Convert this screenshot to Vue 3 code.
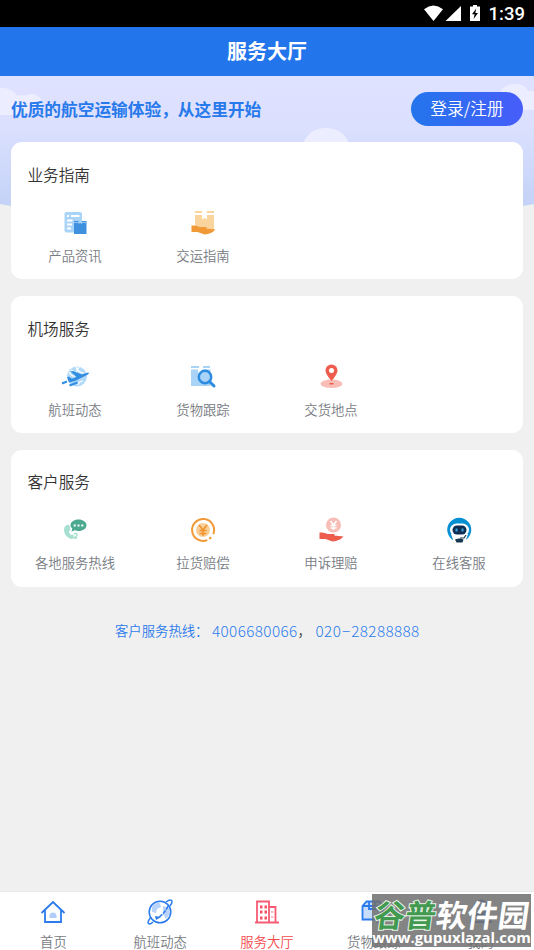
<script setup>
const sections = [
  { title: '业务指南', items: [{ icon: 'news', label: '产品资讯' }, { icon: 'ship', label: '交运指南' }] },
  { title: '机场服务', items: [{ icon: 'flight', label: '航班动态' }, { icon: 'track', label: '货物跟踪' }, { icon: 'place', label: '交货地点' }] },
  { title: '客户服务', items: [{ icon: 'phone', label: '各地服务热线' }, { icon: 'refund', label: '拉货赔偿' }, { icon: 'claim', label: '申诉理赔' }, { icon: 'robot', label: '在线客服' }] }
]
const tabs = [
  { icon: 'home', label: '首页' },
  { icon: 'globe', label: '航班动态' },
  { icon: 'hall', label: '服务大厅', active: true },
  { icon: 'box', label: '货物跟踪' },
  { icon: 'me', label: '我的' }
]
</script>

<template>
  <div class="screen">
    <div class="status">
      <svg class="status-icons" viewBox="0 0 60 20">
        <path d="M0 4.2Q9.5-3 19 4.2L9.5 16Z" fill="#fff" />
        <path d="M37 1V16H21.5Z" fill="#fff" />
        <path d="M46 1.5h3V0h4v1.500h3V16H46Z" fill="#fff" />
        <path d="M52.300 3.500 48 9.300h2.600L49.600 14l4.400-6h-2.700Z" fill="#000" />
      </svg>
      <span class="time">1:39</span>
    </div>
    <header class="header">服务大厅</header>

    <main class="body">
      <svg class="sky" viewBox="0 0 534 130" preserveAspectRatio="none">
        <defs>
          <linearGradient id="sky" x1="0" y1="0" x2="0" y2="1">
            <stop offset="0" stop-color="#dfe2ff" />
            <stop offset=".4" stop-color="#dbe0fe" />
            <stop offset="1" stop-color="#c3d2f7" />
          </linearGradient>
        </defs>
        <path d="M0 0H534V128L523 130H11L0 128Z" fill="url(#sky)" />
        <g fill="#eceeff">
          <path d="M0 12Q12 11 17 20Q22 18 24 20Q34 15 41 23Q43 28 41 34Q30 39 0 39Z" />
          <path d="M498 22Q501 8 515 8Q525 8 528 15L534 15V34H498Z" />
          <path d="M302 70Q308 52 326 52Q344 52 350 70Z" />
        </g>
      </svg>

      <div class="welcome">
        <h1>优质的航空运输体验，从这里开始</h1>
        <button class="login">登录/注册</button>
      </div>

      <section v-for="s in sections" :key="s.title" class="card">
        <h2>{{ s.title }}</h2>
        <div class="grid">
          <div v-for="i in s.items" :key="i.label" class="entry">
            <svg class="icon" viewBox="0 0 28 28">
              <g v-if="i.icon === 'news'">
                <rect x="3.500" y="3" width="17.500" height="20.500" rx="2" fill="#a9d3f7" />
                <path d="M6 7h2M10 7H18.500M6 11.500h5.500M6 15.500h5M6 19.500h4" stroke="#fff" stroke-width="2.200" />
                <path d="M13 12h4.500v3l1.700-1 1.700 1v-3H25.500v13H13Z" fill="#3f91e0" />
                <path d="M12.500 13.500h5M21 13.500h4.500" stroke="#8ec3f3" />
              </g>
              <g v-else-if="i.icon === 'ship'">
                <path d="M6 3h7M18 3h7" stroke="#f9d49d" stroke-width="2" />
                <path d="M6 6h7v4.500l2.500-1.500 2.500 1.500V6h7v15H6Z" fill="#f9d49d" />
                <path d="M2.500 16.500q5-.5 8 1.500h6q2 0 1 1.700h2L26.500 20.500Q22.500 25 15.500 25.500L8.500 23h-6Z" fill="#f19937" />
              </g>
              <g v-else-if="i.icon === 'flight'">
                <circle cx="16" cy="13.500" r="10" fill="#b2d9f8" />
                <path d="M8 9q3 5 6 4m1-9q2 6 8 6m-6 12q1-4 5-4M10 7l5 3 3-6" fill="none" stroke="#fff" stroke-width="1.200" />
                <path d="M6 14l2-.3 3 2 4.500-1.700-6-5.500 2.500-.5 9 3.500 6-2q2 .2 0 2L14 18l-6 1.500Z" fill="#318ee1" />
                <path d="M1 20.500l5-2M8.500 22.500l8-3" stroke="#318ee1" stroke-width="2" />
              </g>
              <g v-else-if="i.icon === 'track'">
                <path d="M2 4h8M14 4h7" stroke="#a9d3f7" stroke-width="2" />
                <path d="M2 6.500h7v4l2-1 2 1v-4h8.500V23H2Z" fill="#a9d3f7" />
                <circle cx="16" cy="14" r="6.200" fill="#a9d3f7" stroke="#2d8ce0" stroke-width="2.500" />
                <path d="M20.500 18.500 25 23" stroke="#2d8ce0" stroke-width="3" stroke-linecap="round" />
              </g>
              <g v-else-if="i.icon === 'place'">
                <ellipse cx="14.500" cy="20.700" rx="11" ry="4.300" fill="#f8bdb6" />
                <path d="M14.500 18Q8.500 11 8.500 7.500a6 6 0 0 1 12 0Q20.500 11 14.500 18Z" fill="#ed5c4d" />
                <circle cx="14.500" cy="7.500" r="2.500" fill="#fff" />
                <path d="M12.500 20.700h4" stroke="#ed5c4d" stroke-width="1.500" />
              </g>
              <g v-else-if="i.icon === 'phone'">
                <path d="M6 9q2.500-1 3 2l.3 3q-.3 1-1.500 1 0 2.500 2.200 4 1.500-1 2.500 0l.5 3q-2 2-5 0-5-3-5-8 0-4 3-5Z" fill="#a7e0d0" />
                <path d="M13 18q3-1.500 3 .5t-3 3.500h3" fill="none" stroke="#a7e0d0" stroke-width="1.500" />
                <path d="M17.500 3.500c4.500 0 8 2.500 8 5.700s-3.500 5.800-8 5.800q-2 0-3.500-.7l-3.500 1.200.8-3q-1.800-1.500-1.800-3.300c0-3.200 3.500-5.700 8-5.700Z" fill="#4ba98f" />
                <path d="M12.700 9.500h2M16.500 9.500h2M20.300 9.500h2" stroke="#fff" stroke-width="2" />
              </g>
              <g v-else-if="i.icon === 'refund'">
                <path d="M24.900 15.900a11 11 0 1 0-4.600 7.100M23.500 19.500l-1.500 2" transform="rotate(12 14 14)" fill="none" stroke="#f19937" stroke-width="2" />
                <circle cx="14" cy="14" r="7" fill="#f9cf97" />
                <path d="M10 9l4 5 4-5M14 14v6M10.500 14.500h7M10.500 17.500h7" fill="none" stroke="#ef942f" stroke-width="1.600" />
              </g>
              <g v-else-if="i.icon === 'claim'">
                <circle cx="16.500" cy="9" r="7.500" fill="#f8bdb6" />
                <path d="M13.500 5l3 4 3-4M16.500 9v5M13.500 9.500h6M13.500 12h6" fill="none" stroke="#fff" stroke-width="1.500" />
                <path d="M2.500 16.500q5-.5 8 1.500h6q2 0 1 1.700h2L26.500 20.500Q22.500 25 15.500 25.500L8.500 23h-6Z" fill="#ed5c4d" />
              </g>
              <g v-else>
                <path d="M9 24.500A12 12 0 1 1 19.500 24.500Z" fill="#078fd3" />
                <rect x="5" y="7.500" width="19" height="13" rx="6.500" fill="#fff" />
                <path d="M6 18h17l-3 8.500H9Z" fill="#fff" />
                <rect x="7.500" y="9.500" width="14" height="9" rx="4.500" fill="#102d52" />
                <path d="M11.500 12.500v3M17.500 12.500v3" stroke="#38a8df" stroke-width="2" />
                <path d="M10 23.500q4.500-2 8.500 0l-1 3h-6Z" fill="#173650" />
                <path d="M15 22h4l2-3" fill="none" stroke="#173650" stroke-width="1.200" />
              </g>
            </svg>
            <span>{{ i.label }}</span>
          </div>
        </div>
      </section>

      <p class="hotline">
        <span class="hot-label">客户服务热线：</span><a>4006680066</a><span class="comma">，</span><a>020<span class="dash">−</span>28288888</a>
      </p>
    </main>

    <nav class="tabs">
      <div v-for="t in tabs" :key="t.label" class="tab" :class="{ active: t.active }">
        <svg class="tab-icon" viewBox="0 0 28 28" fill="none" stroke="#2b7bed" stroke-width="1.800">
          <g v-if="t.icon === 'home'">
            <path d="M2.500 15 14 4l11.500 11M6 12v12h16V12" />
            <path d="M10.500 20v-2a3.500 3.500 0 0 1 7 0v2Z" fill="#b1cdf9" stroke="none" />
          </g>
          <g v-else-if="t.icon === 'globe'">
            <path d="M6 9q4-5 8-4l1 4-4 2-1 4-4-1ZM17 8l6 2 1 6-4 5-3-5Z" fill="#b9d3fb" stroke="none" />
            <circle cx="14" cy="14" r="10.800" stroke-width="1.500" />
            <path d="M20 4q4-3 5.500-1.500T24 8M5 19q-4 5-2.500 6.500T7 24" stroke-width="1.500" />
            <path d="M22 8Q19 15 13 19" stroke-width="1.500" stroke-dasharray="4 1" />
            <path d="M9 18l6 1-5 3Z" fill="#2b7bed" stroke="none" />
          </g>
          <g v-else-if="t.icon === 'hall'" stroke="#f75b74">
            <path d="M4 24V3.500h12V24M16 9h6.500v15M2 24.500h24" />
            <path d="M7 9h2.500M11.500 9H14M7 14h2.500M11.500 14H14M7 20h2.500M11.500 20H14" stroke="#f65263" stroke-width="3" />
            <path d="M18 14h2.500M18 19h2.500" stroke="#fbc0c8" stroke-width="2" />
          </g>
          <g v-else-if="t.icon === 'box'">
            <path d="M2.500 8l4-4.500h13l3 4.500v13.500h-20Z" fill="#c8dcfb" />
            <path d="M2.500 8h20M9 4v7h6V4" /><circle cx="20" cy="21" r="4" fill="#fff" />
          </g>
          <g v-else>
            <circle cx="14" cy="9" r="6.500" fill="#c8dcfb" /><path d="M4 24q0-7 10-8 10 1 10 8Z" fill="#c8dcfb" />
          </g>
        </svg>
        <span>{{ t.label }}</span>
      </div>
    </nav>

    <div class="mark">
      <div class="mark-name"><span>谷普</span>软件园</div>
      <div class="mark-url">www.gupuxlazal.com</div>
    </div>
  </div>
</template>

<style>
body { margin: 0; overflow: hidden; }
</style>

<style scoped>
.screen {
  position: relative;
  display: flex;
  flex-direction: column;
  height: 950px;
  overflow: hidden;
  background: #f0f0f0;
  font-family: "Noto Sans CJK SC", sans-serif;
  font-weight: 350;
  white-space: nowrap;
}
.status {
  display: flex;
  align-items: center;
  justify-content: flex-end;
  flex: 0 0 27px;
  min-height: 0;
  padding-right: 9px;
  background: #000;
  color: #fff;
}
.status-icons { width: 60px; height: 20px; margin: 2px 5px 0 0; }
.time { font: 500 18.500px/25px Roboto, sans-serif; padding-top: 2px; }
.header {
  flex: 0 0 49px;
  background: #2375ec;
  color: #fff;
  font-size: 20px;
  font-weight: 700;
  line-height: 47px;
  text-align: center;
}
.body { position: relative; flex: 1; min-height: 0; padding: 0 11px; }
.sky { position: absolute; left: 0; top: 0; width: 534px; height: 130px; }
.welcome {
  position: relative;
  display: flex;
  align-items: center;
  justify-content: space-between;
  height: 66.400px;
}
h1 { margin: 0; color: #2879eb; font-size: 16.700px; font-weight: 700; }
.login {
  width: 112px;
  height: 34px;
  padding: 0 0 3px;
  border: 0;
  border-radius: 17px;
  background: linear-gradient(90deg, #2375ec, #475dfa);
  color: #fff;
  font: 350 16.700px/30px "Noto Sans CJK SC", sans-serif;
}
.card {
  position: relative;
  height: 137px;
  margin-bottom: 16.700px;
  border-radius: 11px;
  background: #fff;
}
h2 {
  margin: 0;
  padding: 19.500px 0 0 16.500px;
  color: #333;
  font-size: 15.600px;
  font-weight: 350;
  line-height: 24px;
}
.grid { display: grid; grid-template-columns: repeat(4, 1fr); padding-top: 23px; }
.entry {
  display: flex;
  flex-direction: column;
  align-items: center;
  gap: 9px;
  color: #777b83;
  font-size: 13.350px;
  line-height: 20px;
}
.icon { width: 28px; height: 28px; }
.hotline {
  display: flex;
  align-items: center;
  margin: 0;
  padding: 16px 0 0 104px;
  color: #2b7bed;
  font-size: 13.350px;
  line-height: 24px;
}
.hot-label { width: 97px; }
.hotline a { font-size: 15.300px; font-weight: 300; letter-spacing: .370px; line-height: 22px; padding-bottom: 2px; }
.comma { width: 18px; color: #333; }
.dash { display: inline-block; width: 10px; text-align: center; }
.tabs {
  display: grid;
  grid-template-columns: repeat(5, 1fr);
  flex: 0 0 59px;
  min-height: 0;
  background: #fff;
  border-top: 1px solid #e9e9e9;
  box-sizing: border-box;
}
.tab {
  display: flex;
  flex-direction: column;
  align-items: center;
  height: 58px;
  box-sizing: border-box;
  padding-top: 6px;
  gap: 6px;
  color: #777b82;
  font-size: 13.350px;
  line-height: 20px;
}
.tab.active { color: #f54b4b; }
.tab-icon { width: 28px; height: 28px; flex: none; }
.mark {
  position: absolute;
  left: 372px;
  top: 894px;
  width: 159px;
  height: 53px;
  background: rgba(112, 112, 112, .86);
  color: #fff;
}
.mark-name {
  height: 33px;
  padding-left: 3px;
  font-size: 31px;
  font-weight: 700;
  line-height: 40px;
  transform: skewX(-8deg);
}
.mark-name span {
  color: #419a50;
  -webkit-text-stroke: 2px #e8f3e8;
  paint-order: stroke fill;
}
.mark-url { font: 700 14.900px/20px "Open Sans", sans-serif; text-align: center; }
</style>
